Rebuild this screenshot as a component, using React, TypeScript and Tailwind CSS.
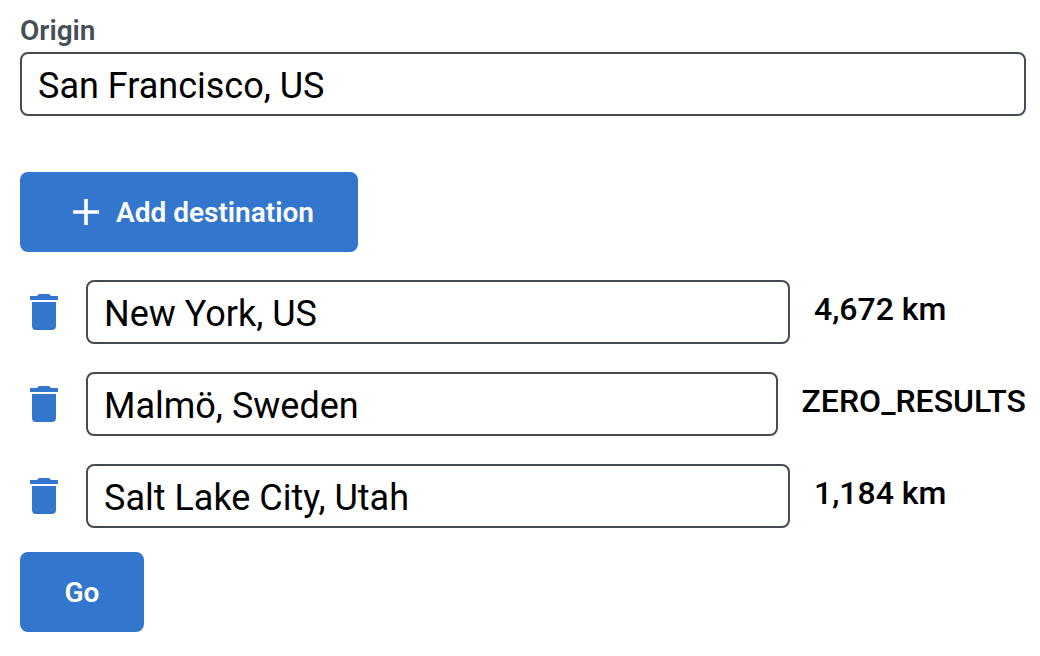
import { useState } from "react";

type Destination = { id: number; place: string; distance: string };

const initialDestinations: Destination[] = [
  { id: 1, place: "New York, US", distance: "4,672 km" },
  { id: 2, place: "Malmö, Sweden", distance: "ZERO_RESULTS" },
  { id: 3, place: "Salt Lake City, Utah", distance: "1,184 km" },
];

const inputClass =
  "h-16 rounded-lg border-2 border-[#454b52] bg-white px-4 pt-1 text-[36px] text-black outline-none focus:border-[#3277cd]";

const buttonClass = "h-20 rounded-lg bg-[#3277cd] text-[28px] font-semibold text-white";

function TrashIcon() {
  return (
    <svg viewBox="0 0 28 36" className="h-9 w-7" fill="currentColor" aria-hidden="true">
      <path d="M2 8h24v24a4 4 0 0 1-4 4H6a4 4 0 0 1-4-4zM28 2v4H0V2h7l2-2h10l2 2z" />
    </svg>
  );
}

function PlusIcon() {
  return (
    <svg viewBox="0 0 28 28" className="size-7" fill="currentColor" aria-hidden="true">
      <path d="M12.2 1h3.6v11.2H27v3.6H15.800V27h-3.6V15.800H1v-3.600h11.200z" />
    </svg>
  );
}

export default function App() {
  const [origin, setOrigin] = useState("San Francisco, US");
  const [destinations, setDestinations] = useState(initialDestinations);

  const update = (id: number, place: string) =>
    setDestinations((list) => list.map((d) => (d.id === id ? { ...d, place } : d)));
  const remove = (id: number) => setDestinations((list) => list.filter((d) => d.id !== id));
  const add = () =>
    setDestinations((list) => [...list, { id: Date.now(), place: "", distance: "" }]);

  return (
    <form
      className="flex flex-col items-start bg-white pt-2.5 pr-[14px] pb-6 pl-5 font-[Roboto,sans-serif]"
      onSubmit={(e) => e.preventDefault()}
    >
      <label htmlFor="origin" className="text-[28px] leading-[42px] font-semibold text-[#454f58]">
        Origin
      </label>
      <input
        id="origin"
        className={`${inputClass} w-full`}
        value={origin}
        onChange={(e) => setOrigin(e.target.value)}
      />
      <button
        type="button"
        onClick={add}
        className={`${buttonClass} mt-14 flex items-center gap-4 pr-11 pl-13`}
      >
        <PlusIcon />
        <span className="pt-0.5">Add destination</span>
      </button>
      <ul className="mt-7 flex w-full flex-col gap-7">
        {destinations.map((d) => (
          <li key={d.id} className="flex h-16 items-center">
            <button
              type="button"
              aria-label={`Remove ${d.place}`}
              onClick={() => remove(d.id)}
              className="mr-[18px] flex size-12 shrink-0 items-center justify-center text-[#3277cd]"
            >
              <TrashIcon />
            </button>
            <input
              aria-label="Destination"
              className={`${inputClass} min-w-0 flex-1`}
              value={d.place}
              onChange={(e) => update(d.id, e.target.value)}
            />
            <output className="ml-6 min-w-53 pb-1.5 text-[32px] font-medium text-black">
              {d.distance}
            </output>
          </li>
        ))}
      </ul>
      <button type="submit" className={`${buttonClass} mt-6 min-w-31 px-11 pt-0.5`}>
        Go
      </button>
    </form>
  );
}
